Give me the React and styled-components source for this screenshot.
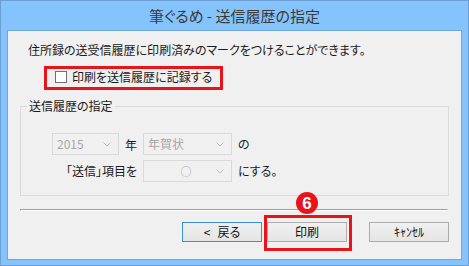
import React from 'react';
import styled, { createGlobalStyle } from 'styled-components';

const Global = createGlobalStyle`
  html, body { margin: 0; padding: 0; background: #ffffff; }
  body {
    font-family: "Noto Sans CJK JP", "Noto Sans", sans-serif;
    font-feature-settings: "palt";
    -webkit-font-smoothing: antialiased;
  }
`;

const Window = styled.div`
  width: 469px;
  height: 266px;
  box-sizing: border-box;
  background: #85c3fc;
  border: 1px solid #6d9fd6;
  padding: 0 6px 5px;
  display: flex;
  flex-direction: column;
`;

const TitleBar = styled.div`
  height: 29px;
  display: flex;
  align-items: center;
  justify-content: center;
  font-size: 15px;
  color: #3a3a3a;
  line-height: 1;
`;

const Client = styled.div`
  flex: 1;
  background: #f0f0f0;
  border: 1px solid #72a7dc;
  padding: 0 12px;
  display: flex;
  flex-direction: column;
  font-size: 12px;
  color: #1a1a1a;
`;

const Description = styled.div`
  margin-top: 11px;
  padding-left: 8px;
  line-height: 16px;
  height: 16px;
`;

const CheckRow = styled.div`
  margin-top: 10px;
  margin-left: 35px;
  display: flex;
`;

const Highlight = styled.div`
  position: relative;
  display: inline-flex;
  align-items: center;
  gap: 5px;
  height: 17px;
  line-height: 17px;
`;

const RedFrame = styled.div`
  position: absolute;
  top: ${(p) => p.$t}px;
  left: ${(p) => p.$l}px;
  right: ${(p) => p.$r}px;
  bottom: ${(p) => p.$b}px;
  border: 3px solid #e8141a;
  pointer-events: none;
`;

const CheckBox = styled.span`
  width: 10px;
  height: 10px;
  border: 1px solid #707070;
  background: #ffffff;
  flex: none;
`;

const Group = styled.fieldset`
  margin: 13px 0 0;
  padding: 0;
  border: 1px solid #dcdcdc;
  min-width: 0;
`;

const Legend = styled.legend`
  margin-left: 6px;
  padding: 0 2px;
  line-height: 16px;
  font-size: 12px;
  color: #1a1a1a;
`;

const GroupBody = styled.div`
  padding: 19px 0 13px 31px;
  display: grid;
  grid-template-columns: 85px 89px auto;
  column-gap: 6px;
  row-gap: 5px;
  align-items: center;
`;

const YearCell = styled.div`
  display: flex;
  align-items: center;
  justify-content: space-between;
`;

const RightLabel = styled.div`
  text-align: right;
  line-height: 22px;
  white-space: nowrap;
`;

const Plain = styled.div`
  line-height: 22px;
  white-space: nowrap;
`;

const Select = styled.div`
  width: ${(p) => p.$w}px;
  height: 22px;
  box-sizing: border-box;
  border: 1px solid #d9d9d9;
  background: #f0f0f0;
  color: #a6a6a6;
  display: flex;
  align-items: center;
  padding: 0 7px 0 4px;
  font-size: 12px;
  line-height: 1;
`;

const SelectText = styled.span`
  flex: 1;
  text-align: ${(p) => (p.$center ? 'center' : 'left')};
  padding-left: ${(p) => (p.$center ? '8px' : '0')};
  font-size: ${(p) => (p.$center ? '11px' : '12px')};
`;

const Separator = styled.div`
  margin-top: 13px;
  height: 0;
  border-top: 1px solid #a0a0a0;
  border-bottom: 1px solid #ffffff;
  border-left: 1px solid #a0a0a0;
  border-right: 1px solid #ffffff;
  margin-right: 1px;
`;

const ButtonRow = styled.div`
  margin-top: 11px;
  display: flex;
  justify-content: flex-end;
`;

const ButtonSlot = styled.div`
  position: relative;
  margin-right: ${(p) => p.$mr || 0}px;
`;

const Button = styled.button`
  width: 80px;
  height: 20px;
  box-sizing: border-box;
  border: 1px solid ${(p) => (p.$default ? '#3d8ee2' : '#acacac')};
  background: linear-gradient(#f0f0f0, #e5e5e5);
  font-family: inherit;
  font-feature-settings: "palt";
  font-size: 12px;
  color: #111;
  padding: 0;
  line-height: 1;
  display: flex;
  align-items: center;
  justify-content: center;
  gap: ${(p) => p.$gap || 0}px;
`;

const Badge = styled.div`
  position: absolute;
  left: 50%;
  top: -30px;
  width: 22px;
  height: 22px;
  margin-left: -11px;
  border-radius: 50%;
  background: #e8141a;
  color: #ffffff;
  font-family: "Liberation Sans", Arial, sans-serif;
  font-weight: bold;
  font-size: 17px;
  display: flex;
  align-items: center;
  justify-content: center;
  line-height: 1;
`;

const Chevron = () => (
  <svg width="8" height="5" viewBox="0 0 8 5">
    <polyline points="0.5,0.5 4,4 7.5,0.5" fill="none" stroke="#bdbdbd" strokeWidth="1" />
  </svg>
);

export default function App() {
  return (
    <>
      <Global />
      <Window>
        <TitleBar>筆ぐるめ - 送信履歴の指定</TitleBar>
        <Client>
          <Description>住所録の送受信履歴に印刷済みのマークをつけることができます。</Description>
          <CheckRow>
            <Highlight>
              <CheckBox />
              <span>印刷を送信履歴に記録する</span>
              <RedFrame $t={-2} $l={-11} $r={-11} $b={-5} />
            </Highlight>
          </CheckRow>
          <Group>
            <Legend>送信履歴の指定</Legend>
            <GroupBody>
              <YearCell>
                <Select $w={67}>
                  <SelectText>2015</SelectText>
                  <Chevron />
                </Select>
                <span>年</span>
              </YearCell>
              <Select $w={89}>
                <SelectText>年賀状</SelectText>
                <Chevron />
              </Select>
              <Plain>の</Plain>
              <RightLabel>「送信」項目を</RightLabel>
              <Select $w={89}>
                <SelectText $center>○</SelectText>
                <Chevron />
              </Select>
              <Plain>にする。</Plain>
            </GroupBody>
          </Group>
          <Separator />
          <ButtonRow>
            <ButtonSlot $mr={5}>
              <Button $default $gap={7}>
                <span>&lt;</span>
                <span>戻る</span>
              </Button>
            </ButtonSlot>
            <ButtonSlot $mr={22}>
              <Badge>6</Badge>
              <Button>印刷</Button>
              <RedFrame $t={-7} $l={-3} $r={-5} $b={-9} />
            </ButtonSlot>
            <ButtonSlot>
              <Button>ｷｬﾝｾﾙ</Button>
            </ButtonSlot>
          </ButtonRow>
        </Client>
      </Window>
    </>
  );
}
